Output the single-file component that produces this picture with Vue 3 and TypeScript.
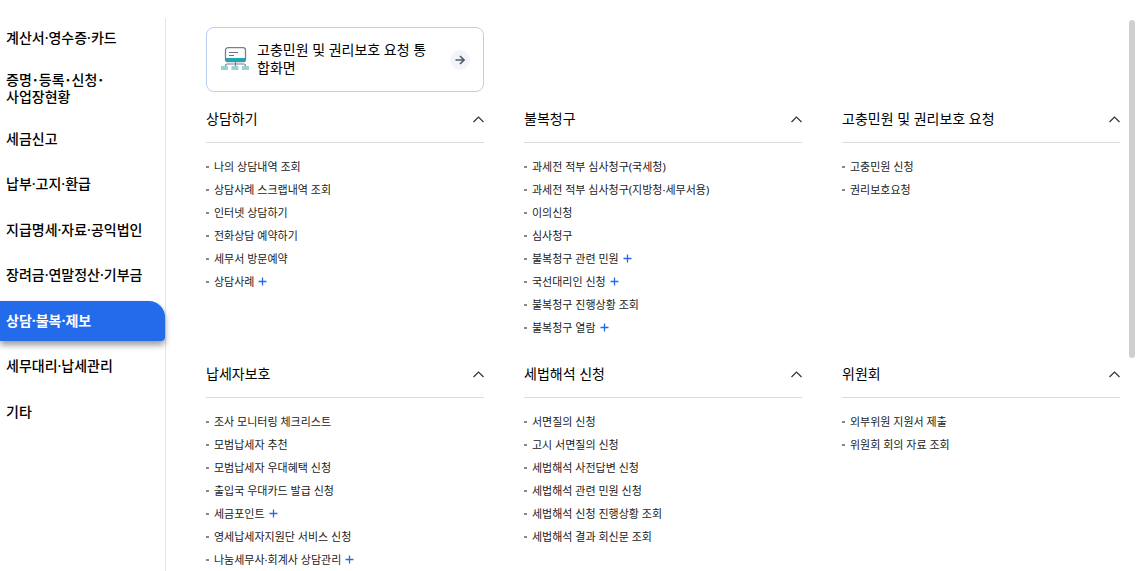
<script setup lang="ts">
import { ref } from 'vue'

interface Entry {
  label: string
  more?: boolean
}
interface Group {
  title: string
  entries: Entry[]
}

const categories: string[] = [
  '계산서·영수증·카드',
  '증명･등록･신청･\n사업장현황',
  '세금신고',
  '납부·고지·환급',
  '지급명세·자료·공익법인',
  '장려금·연말정산·기부금',
  '상담·불복·제보',
  '세무대리·납세관리',
  '기타',
]
const active = ref(6)

const groups: Group[] = [
  {
    title: '상담하기',
    entries: [
      { label: '나의 상담내역 조회' },
      { label: '상담사례 스크랩내역 조회' },
      { label: '인터넷 상담하기' },
      { label: '전화상담 예약하기' },
      { label: '세무서 방문예약' },
      { label: '상담사례', more: true },
    ],
  },
  {
    title: '불복청구',
    entries: [
      { label: '과세전 적부 심사청구(국세청)' },
      { label: '과세전 적부 심사청구(지방청·세무서용)' },
      { label: '이의신청' },
      { label: '심사청구' },
      { label: '불복청구 관련 민원', more: true },
      { label: '국선대리인 신청', more: true },
      { label: '불복청구 진행상황 조회' },
      { label: '불복청구 열람', more: true },
    ],
  },
  {
    title: '고충민원 및 권리보호 요청',
    entries: [{ label: '고충민원 신청' }, { label: '권리보호요청' }],
  },
  {
    title: '납세자보호',
    entries: [
      { label: '조사 모니터링 체크리스트' },
      { label: '모범납세자 추천' },
      { label: '모범납세자 우대혜택 신청' },
      { label: '출입국 우대카드 발급 신청' },
      { label: '세금포인트', more: true },
      { label: '영세납세자지원단 서비스 신청' },
      { label: '나눔세무사·회계사 상담관리', more: true },
    ],
  },
  {
    title: '세법해석 신청',
    entries: [
      { label: '서면질의 신청' },
      { label: '고시 서면질의 신청' },
      { label: '세법해석 사전답변 신청' },
      { label: '세법해석 관련 민원 신청' },
      { label: '세법해석 신청 진행상황 조회' },
      { label: '세법해석 결과 회신문 조회' },
    ],
  },
  {
    title: '위원회',
    entries: [{ label: '외부위원 지원서 제출' }, { label: '위원회 회의 자료 조회' }],
  },
]
const closed = ref<Record<string, boolean>>({})
const toggle = (title: string): void => {
  closed.value[title] = !closed.value[title]
}
</script>

<template>
  <div class="menu">
    <nav class="side">
      <ul class="categories">
        <li v-for="(name, i) in categories" :key="name">
          <button
            type="button"
            class="category"
            :class="{ active: i === active }"
            @click="active = i"
          >{{ name }}</button>
        </li>
      </ul>
    </nav>

    <main class="content">
      <div class="columns">
        <a class="card" href="#">
          <svg class="card-icon" width="28" height="25" viewBox="0 0 28 25" aria-hidden="true">
            <path d="M4.500 11h20v2a2 2 0 0 1-2 2h-16a2 2 0 0 1-2-2z" fill="#1ba8ae" />
            <rect x="4.500" y="0.700" width="20" height="14" rx="2.500" fill="none" stroke="#7b7d95" stroke-width="1.300" />
            <path d="M8 5.500h9M8 8.500h5" stroke="#6c6f86" stroke-width="1.200" fill="none" />
            <path d="M14.500 15v5M4.500 20v-1q0-2 2-2h16q2 0 2 2v1" stroke="#7b7d95" stroke-width="1.200" fill="none" />
            <path d="M0 19h7v4H0zM10.500 19h7v4h-7zM21 19h7v4h-7z" fill="#94d3cf" />
          </svg>
          <span class="card-text">고충민원 및 권리보호 요청 통합화면</span>
          <span class="go">
            <svg width="10" height="10" viewBox="0 0 10 10" aria-hidden="true">
              <path d="M0.500 5h8M5 1l4 4-4 4" fill="none" stroke="#555a6b" stroke-width="1.700" />
            </svg>
          </span>
        </a>
      </div>

      <div class="columns groups">
        <section v-for="group in groups" :key="group.title">
          <h2>
            <button type="button" class="heading" :aria-expanded="!closed[group.title]" @click="toggle(group.title)">
              <span>{{ group.title }}</span>
              <svg width="12" height="8" viewBox="0 0 12 8" aria-hidden="true">
                <path d="M1.500 7l5-5 5 5" fill="none" stroke="#333" stroke-width="1.200" />
              </svg>
            </button>
          </h2>
          <ul v-show="!closed[group.title]" class="entries">
            <li v-for="entry in group.entries" :key="entry.label">
              <a href="#">{{ entry.label }}</a>
              <svg v-if="entry.more" class="plus" width="9" height="9" viewBox="0 0 9 9" aria-hidden="true">
                <path d="M4.500 0.500v8M0.500 4.500h8" stroke="#2468ec" stroke-width="1.300" />
              </svg>
            </li>
          </ul>
        </section>
      </div>
    </main>
    <div class="thumb"></div>
  </div>
</template>

<style>
body {
  margin: 0;
  background: #fff;
}
</style>

<style scoped>
.menu {
  position: relative;
  display: grid;
  grid-template-columns: 166px 1fr;
  box-sizing: border-box;
  height: 100vh;
  padding-top: 18px;
  overflow: hidden;
  font-family: "Noto Sans", "Noto Sans CJK KR", sans-serif;
  color: #000;
}
ul {
  margin: 0;
  padding: 0;
  list-style: none;
}
button {
  border: 0;
  background: none;
  font-family: inherit;
  color: inherit;
  text-align: left;
  cursor: pointer;
}
a {
  color: inherit;
  text-decoration: none;
}
.side {
  border-right: 1px solid #e2e2f8;
}
.categories {
  display: flex;
  flex-direction: column;
  justify-content: space-between;
  min-height: 414px;
}
.category {
  display: block;
  width: 100%;
  min-height: 40px;
  padding: 7px 0 9px 6px;
  font-size: 14px;
  font-weight: 500;
  line-height: 17px;
  white-space: pre-line;
}
.category.active {
  border-radius: 0 16px 4px 0;
  background: #246beb;
  box-shadow: 0 4px 6px rgba(0, 0, 0, 0.4);
  color: #fff;
  font-weight: 700;
}
.content {
  padding: 9px 21px 0 40px;
}
.columns {
  display: grid;
  grid-template-columns: repeat(3, minmax(0, 1fr));
  column-gap: 40px;
}
.groups {
  row-gap: 10px;
  padding-top: 3px;
}
.card {
  display: flex;
  align-items: center;
  box-sizing: border-box;
  min-height: 65px;
  padding: 0 13px 0 14px;
  border: 1px solid #bccff0;
  border-radius: 8px;
}
.card-icon {
  flex: none;
  margin-right: 8px;
}
.card-text {
  flex: 1;
  padding: 0 20px 2px 0;
  font-size: 14px;
  line-height: 18px;
}
.go {
  display: flex;
  flex: none;
  align-items: center;
  justify-content: center;
  width: 20px;
  height: 20px;
  border-radius: 50%;
  background: #f1f5fb;
}
h2 {
  margin: 0;
  border-bottom: 1px solid #dcdcdc;
}
.heading {
  display: flex;
  align-items: center;
  justify-content: space-between;
  width: 100%;
  height: 47px;
  padding: 0;
  font-size: 14px;
  font-weight: 400;
  line-height: 18px;
}
.entries {
  padding: 12px 0 1px;
}
.entries li {
  display: flex;
  align-items: center;
  font-size: 11px;
  line-height: 23px;
  color: #222;
}
.entries li::before {
  width: 3px;
  height: 2px;
  margin-right: 5px;
  background: #888;
  content: "";
}
.plus {
  margin-left: 4px;
}
.thumb {
  position: absolute;
  top: 20px;
  right: 6px;
  width: 6px;
  height: 338px;
  border-radius: 3px;
  background: #cfcfcf;
}
</style>
